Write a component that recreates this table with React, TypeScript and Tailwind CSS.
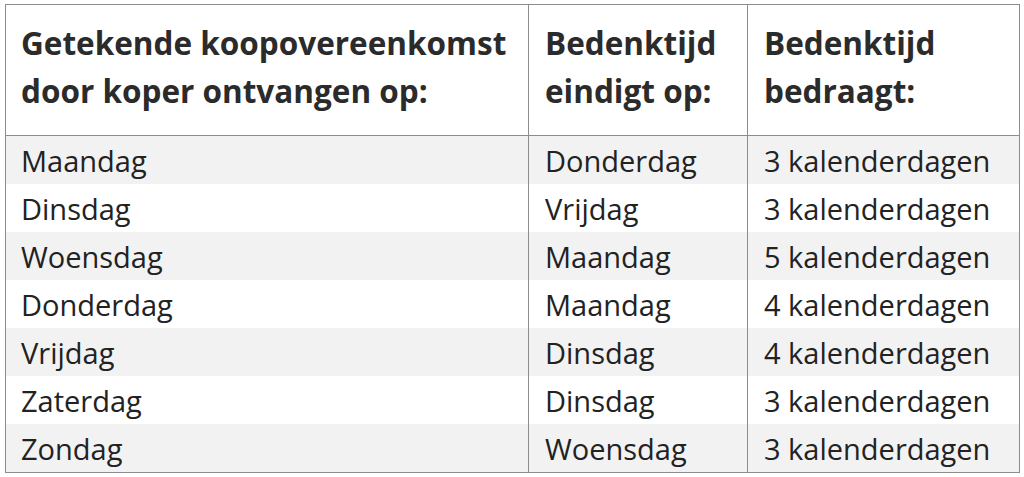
import React from 'react';

const rows: [string, string, string][] = [
  ['Maandag', 'Donderdag', '3 kalenderdagen'],
  ['Dinsdag', 'Vrijdag', '3 kalenderdagen'],
  ['Woensdag', 'Maandag', '5 kalenderdagen'],
  ['Donderdag', 'Maandag', '4 kalenderdagen'],
  ['Vrijdag', 'Dinsdag', '4 kalenderdagen'],
  ['Zaterdag', 'Dinsdag', '3 kalenderdagen'],
  ['Zondag', 'Woensdag', '3 kalenderdagen'],
];

const thCls =
  'h-[131px] pt-[14px] pb-[20px] text-left align-top text-[31.5px] leading-[48px] font-bold text-[#2b2b2b] whitespace-nowrap overflow-visible';

export default function App() {
  return (
    <div className="w-[1024px] h-[477px] overflow-hidden bg-white pl-[5px] pt-[4px] font-['Open_Sans',sans-serif]">
      <table className="w-[1014px] table-fixed border-collapse border border-[#8c8c8c] text-[#222]">
        <colgroup>
          <col className="w-[523px]" />
          <col className="w-[219px]" />
          <col className="w-[272px]" />
        </colgroup>
        <thead>
          <tr className="border-b border-[#8c8c8c]">
            <th className={`${thCls} px-[15px]`}>
              Getekende koopovereenkomst
              <br />
              door koper ontvangen op:
            </th>
            <th className={`${thCls} border-l border-[#8c8c8c] px-[16px]`}>
              Bedenktijd
              <br />
              eindigt op:
            </th>
            <th className={`${thCls} border-l border-[#8c8c8c] px-[16px]`}>
              Bedenktijd
              <br />
              bedraagt:
            </th>
          </tr>
        </thead>
        <tbody>
          {rows.map((r, i) => (
            <tr key={i} className={i % 2 === 0 ? 'bg-[#f2f2f2]' : 'bg-white'}>
              <td className="h-[48px] px-[15px] pt-[2px] text-[29px] leading-[46px] align-top whitespace-nowrap">{r[0]}</td>
              <td className="h-[48px] border-l border-[#8c8c8c] px-[16px] pt-[2px] text-[29px] leading-[46px] align-top whitespace-nowrap">{r[1]}</td>
              <td className="h-[48px] border-l border-[#8c8c8c] px-[16px] pt-[2px] text-[29px] leading-[46px] align-top whitespace-nowrap">{r[2]}</td>
            </tr>
          ))}
        </tbody>
      </table>
    </div>
  );
}
